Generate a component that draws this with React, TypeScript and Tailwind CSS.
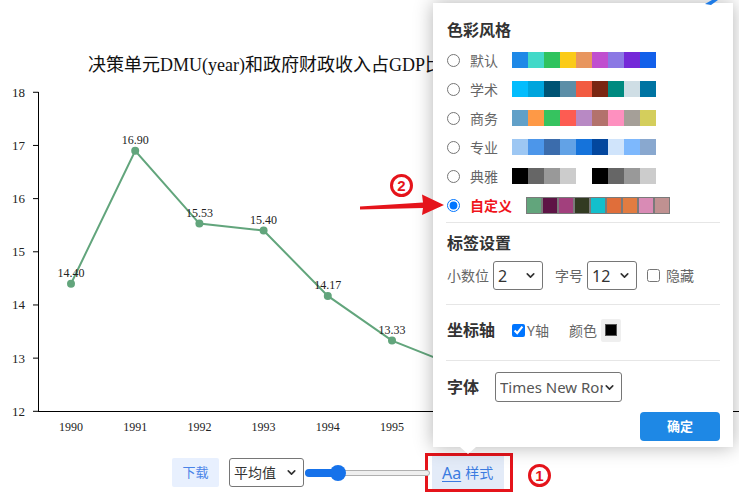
import { ChevronDown } from "lucide-react";

const serif = '"Liberation Serif", "Noto Sans CJK SC", serif';

const series = [
  { year: "1990", v: 14.4 },
  { year: "1991", v: 16.9 },
  { year: "1992", v: 15.53 },
  { year: "1993", v: 15.4 },
  { year: "1994", v: 14.17 },
  { year: "1995", v: 13.33 },
  { year: "1996", v: 12.85 },
];

const xOf = (i: number) => 71 + i * 64.2;
const yOf = (v: number) => 411.3 - (v - 12) * 53.17;

const palettes = [
  {
    name: "默认",
    colors: ["#1e89e7", "#42d9c8", "#2fc35e", "#fbcb18", "#e8965f", "#c04fcf", "#8b78e4", "#7428d8", "#1260ea"],
  },
  {
    name: "学术",
    colors: ["#03bdfd", "#00a5dd", "#005373", "#5c8ea7", "#f25b41", "#7a2612", "#008a80", "#cfdee5", "#0074a2"],
  },
  {
    name: "商务",
    colors: ["#61a0c8", "#fe9946", "#36c35f", "#fd5c52", "#b889c4", "#b3726c", "#fe90bf", "#a59f98", "#d4ce5c"],
  },
  {
    name: "专业",
    colors: ["#9dc7f3", "#4c96ea", "#3b6cac", "#62a2e6", "#1573db", "#03479e", "#d0e4fb", "#7db8fd", "#89a8cf"],
  },
  {
    name: "典雅",
    colors: ["#000000", "#666666", "#999999", "#cccccc", "#ffffff", "#000000", "#666666", "#999999", "#cccccc"],
  },
];

const customColors = ["#62a57c", "#5e1446", "#a2407d", "#323b22", "#13bfcc", "#e06e3a", "#e27c41", "#d98bb5", "#c09191"];

function Chart() {
  const pts = series.map((d, i) => `${xOf(i)},${yOf(d.v)}`).join(" ");
  return (
    <svg width={739} height={448} className="block" style={{ fontFamily: serif }}>
      <text x={88} y={71} fontSize={18} fill="#111">
        决策单元DMU(year)和政府财政收入占GDP比重
      </text>

      {/* y axis */}
      <line x1={38.5} y1={92} x2={38.5} y2={411.5} stroke="#000" strokeWidth={1} />
      {[12, 13, 14, 15, 16, 17, 18].map((t) => (
        <g key={t}>
          <line x1={33} y1={yOf(t)} x2={38.5} y2={yOf(t)} stroke="#000" />
          <text x={25} y={yOf(t) + 4.5} fontSize={13} textAnchor="end" fill="#222">
            {t}
          </text>
        </g>
      ))}

      {/* x axis */}
      <line x1={38} y1={411.5} x2={739} y2={411.5} stroke="#000" />
      {series.map((d, i) => (
        <text key={d.year} x={xOf(i)} y={431} fontSize={12} textAnchor="middle" fill="#222">
          {d.year}
        </text>
      ))}

      <polyline points={pts} fill="none" stroke="#62a57c" strokeWidth={2} />
      {series.map((d, i) => (
        <g key={d.year}>
          <circle cx={xOf(i)} cy={yOf(d.v)} r={4} fill="#62a57c" />
          <text x={xOf(i)} y={yOf(d.v) - 7} fontSize={12} textAnchor="middle" fill="#222">
            {d.v.toFixed(2)}
          </text>
        </g>
      ))}
    </svg>
  );
}

function SelectBox({ value, className }: { value: string; className: string }) {
  return (
    <div
      className={`flex h-[29px] items-center justify-between overflow-hidden rounded-[3px] border border-[#767676] bg-white pl-[4px] pr-[5px] text-[#333] ${className}`}
    >
      <span className="min-w-0 overflow-hidden whitespace-nowrap">{value}</span>
      <ChevronDown size={13} strokeWidth={3} className="shrink-0 text-[#333]" />
    </div>
  );
}

function CircledNum({ n, className = "" }: { n: number; className?: string }) {
  return (
    <span
      className={`flex h-[23px] w-[23px] items-center justify-center rounded-full border-[3px] border-[#e5141b] text-[15px] font-bold leading-none text-[#e5141b] ${className}`}
      style={{ fontFamily: '"Liberation Sans", sans-serif' }}
    >
      {n}
    </span>
  );
}

function StylePanel() {
  return (
    <div className="absolute left-[433px] top-[3px] h-[444px] w-[300px] bg-white px-[13px] pt-[15px] shadow-[0_0_18px_rgba(0,0,0,0.3)]">
      <h3 className="ml-[1px] h-6 text-[16px] font-bold leading-6 text-[#333]">色彩风格</h3>

      <div className="mt-[3.5px]">
        {palettes.map((p) => (
          <div key={p.name} className="flex h-[29px] items-center pl-[1px]">
            <input type="radio" name="palette" className="m-0 h-[13px] w-[13px]" readOnly />
            <span className="ml-[10px] w-[42px] text-[14px] text-[#666]">{p.name}</span>
            <div className="flex">
              {p.colors.map((c, i) => (
                <span key={i} className="h-4 w-4" style={{ backgroundColor: c }} />
              ))}
            </div>
          </div>
        ))}
        <div className="flex h-[29px] items-center pl-[1px]">
          <input type="radio" name="palette" className="m-0 h-[13px] w-[13px]" defaultChecked />
          <span className="ml-[10px] text-[14px] font-bold text-[#f0141b]">自定义</span>
          <div className="ml-[14px] flex">
            {customColors.map((c, i) => (
              <span key={i} className="h-[17px] w-4 border border-[#7a7a7a]" style={{ backgroundColor: c }} />
            ))}
          </div>
        </div>
      </div>

      <div className="mt-[2.5px] h-px bg-[#e6e6e6]" />

      <h3 className="ml-[1px] mt-[8px] h-6 text-[16px] font-bold leading-6 text-[#333]">标签设置</h3>
      <div className="ml-[1px] mt-[6px] flex h-[29px] items-center text-[14px] text-[#666]">
        <span>小数位</span>
        <SelectBox value="2" className="ml-[4px] w-[50px] text-[16px]" />
        <span className="ml-[12px]">字号</span>
        <SelectBox value="12" className="ml-[4px] w-[50px] text-[16px]" />
        <input type="checkbox" className="m-0 ml-[10px] h-[13px] w-[13px]" readOnly />
        <span className="ml-[6px]">隐藏</span>
      </div>

      <div className="mt-[14px] h-px bg-[#e6e6e6]" />

      <div className="ml-[1px] mt-[13px] flex h-6 items-center">
        <span className="text-[16px] font-bold text-[#333]">坐标轴</span>
        <input type="checkbox" className="m-0 ml-[17px] h-[13px] w-[13px]" defaultChecked />
        <span className="ml-[2px] text-[14px] text-[#666]">Y轴</span>
        <span className="ml-[20px] text-[14px] text-[#666]">颜色</span>
        <span className="ml-[4px] flex h-[23px] w-[20px] items-center justify-center rounded-[2px] bg-[#efefef]">
          <span className="h-3 w-3 border border-[#555] bg-black" />
        </span>
      </div>

      <div className="mt-[18px] h-px bg-[#e6e6e6]" />

      <div className="ml-[1px] mt-[11px] flex h-[30px] items-center">
        <span className="w-[48px] text-[16px] font-bold text-[#333]">字体</span>
        <SelectBox value="Times New Roman" className="h-[30px] w-[127px] text-[15px] text-[#555]" />
      </div>

      <div className="mt-[10px] flex justify-end">
        <button className="h-[29px] w-[80px] rounded-[4px] bg-[#1e88e5] text-[13px] font-bold text-white">确定</button>
      </div>

      {/* caret pointing at the style button */}
      <span className="absolute left-[27px] top-[444px] h-0 w-0 border-x-[8px] border-t-[7px] border-x-transparent border-t-white" />
    </div>
  );
}

function Toolbar() {
  return (
    <div className="flex h-[49px] items-center pl-[172px] text-[14px]">
      <button className="h-[29px] w-[47px] rounded-[2px] bg-[#e8f0fe] text-[13px] text-[#4a84e8]">下载</button>
      <SelectBox value="平均值" className="ml-[10px] w-[75px] text-[14px] text-[#222]" />

      {/* slider */}
      <div className="relative ml-[1px] flex h-4 w-[125px] items-center">
        <div className="h-[6px] w-full rounded-full border border-[#b0b0b0] bg-[#efefef]" />
        <div className="absolute left-0 h-[8px] w-[36px] rounded-full bg-[#1672ea]" />
        <div className="absolute left-[25px] h-4 w-4 rounded-full bg-[#1672ea]" />
      </div>

      <div className="-ml-[5px] flex h-[39px] w-[88px] items-center border-[3px] border-[#e5141b] pl-[4px]">
        <button className="flex h-[33px] w-[72px] items-center bg-[#e3ebf8] pl-[10px] text-[#3b7be0]">
          <span className="text-[16px] underline underline-offset-2">Aa</span>
          <span className="ml-[4px] text-[14px]">样式</span>
        </button>
      </div>
      <CircledNum n={1} className="ml-[15px] mt-[5px]" />
    </div>
  );
}

export default function App() {
  return (
    <div
      className="relative h-[497px] w-[739px] overflow-hidden bg-white"
      style={{ fontFamily: '"Noto Sans", "Noto Sans CJK SC", sans-serif' }}
    >
      <Chart />
      <Toolbar />
      <StylePanel />

      {/* annotation: ② and arrow */}
      <CircledNum n={2} className="absolute left-[390px] top-[174px]" />
      <svg className="pointer-events-none absolute left-0 top-0" width={739} height={497}>
        <polygon points="360,206.5 423,202.5 422,194.5 444,205 422,215 423,208 360,209.5" fill="#e5141b" />
        <polygon points="705,4 712,0 718,0 711,5" fill="#1e7be6" />
      </svg>
    </div>
  );
}
